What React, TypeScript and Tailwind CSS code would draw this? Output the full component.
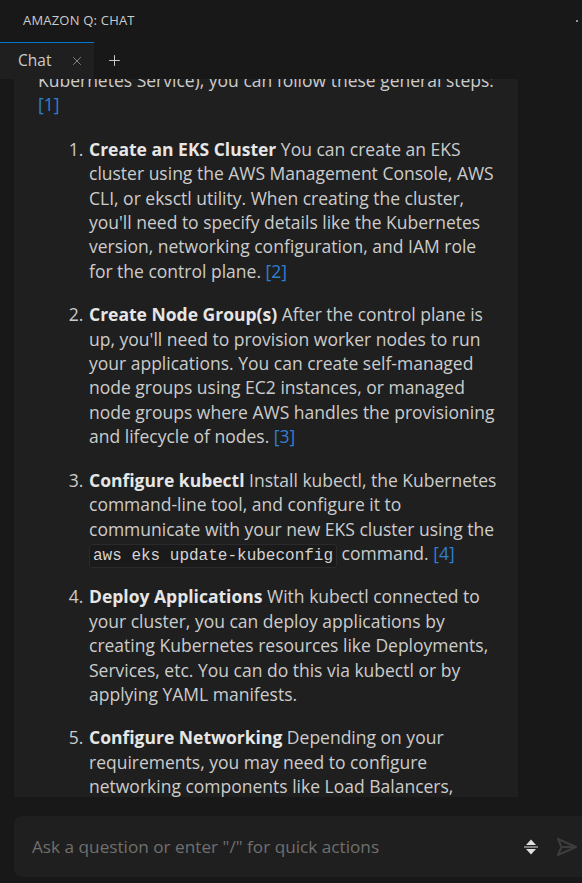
import { X, Plus } from 'lucide-react'

const link = 'text-[#2f7fd0]'

function Ref({ n }: { n: number }) {
  return <span className={link}>[{n}]</span>
}

export default function App() {
  return (
    <div
      className="w-[582px] h-[883px] bg-[#181818] text-[#cccccc] flex flex-col overflow-hidden"
      style={{ fontFamily: '"Open Sans", "Noto Sans", sans-serif' }}
    >
      {/* header */}
      <div className="h-[42px] flex items-center justify-between pl-[23px] pr-[4px] shrink-0">
        <span className="text-[13px] tracking-[0.2px] text-[#cccccc]">AMAZON Q: CHAT</span>
        <span className="w-[2px] h-[2px] bg-[#bbbbbb] rounded-full" />
      </div>

      {/* tabs */}
      <div className="h-[37px] flex items-stretch shrink-0">
        <div className="w-[94px] bg-[#1f1f1f] border-t border-[#0078d4] flex items-center pl-[18px] pr-[10px] justify-between">
          <span className="text-[15.5px] text-[#cccccc]">Chat</span>
          <X size={14} strokeWidth={1.4} className="text-[#9d9d9d]" />
        </div>
        <div className="flex items-center pl-[12px]">
          <Plus size={17} strokeWidth={1.4} className="text-[#cccccc]" />
        </div>
      </div>

      {/* conversation */}
      <div className="h-[718px] ml-[14px] w-[504px] bg-[#1f1f1f] overflow-hidden shrink-0">
        <div className="-mt-[11px] pl-[24px] pr-[18px] text-[17.5px] leading-[24.4px] text-[#cccccc]">
          <p>
            Kubernetes Service), you can follow these general steps:{' '}
            <Ref n={1} />
          </p>
          <ol className="list-decimal pl-[50px] mt-[20px] space-y-[19px]">
            <li className="pl-[1px]">
              <b className="font-bold text-[#e6e6e6]">Create an EKS Cluster</b> You can create an EKS
              cluster using the AWS Management Console, AWS CLI, or eksctl utility. When creating the
              cluster, you'll need to specify details like the Kubernetes version, networking
              configuration, and IAM role for the control plane. <Ref n={2} />
            </li>
            <li className="pl-[1px]">
              <b className="font-bold text-[#e6e6e6]">Create Node Group(s)</b> After the control plane
              is up, you'll need to provision worker nodes to run your applications. You can create
              self-managed node groups using EC2 instances, or managed node groups where AWS handles
              the provisioning and lifecycle of nodes. <Ref n={3} />
            </li>
            <li className="pl-[1px]">
              <b className="font-bold text-[#e6e6e6]">Configure kubectl</b> Install kubectl, the
              Kubernetes command-line tool, and configure it to communicate with your new EKS cluster
              using the{' '}
              <code
                className="bg-[#1a1a1a] border border-[#2a2a2a] rounded-[3px] px-[3px] py-[2px] text-[16px] leading-none text-[#d4d4d4] whitespace-nowrap"
                style={{ fontFamily: '"Liberation Mono", "DejaVu Sans Mono", monospace' }}
              >
                aws eks update-kubeconfig
              </code>{' '}
              command. <Ref n={4} />
            </li>
            <li className="pl-[1px]">
              <b className="font-bold text-[#e6e6e6]">Deploy Applications</b> With kubectl connected
              to your cluster, you can deploy applications by creating Kubernetes resources like
              Deployments, Services, etc. You can do this via kubectl or by applying YAML manifests.
            </li>
            <li className="pl-[1px]">
              <b className="font-bold text-[#e6e6e6]">Configure Networking</b> Depending on your
              requirements, you may need to configure networking components like Load Balancers,
              Ingress Controllers, and Network Policies.
            </li>
          </ol>
        </div>
      </div>

      {/* input */}
      <div className="mt-[19px] ml-[14px] w-[580px] h-[61px] bg-[#1f1f1f] rounded-[8px] flex items-center pl-[18px] shrink-0">
        <span className="flex-1 text-[17.2px] text-[#6f6f6f]">Ask a question or enter "/" for quick actions</span>
        <svg width="16" height="18" viewBox="0 0 16 18" className="mr-[17px]">
          <path d="M8 1.5 L13 7 H3 Z" fill="#e0e0e0" />
          <rect x="1" y="8.5" width="14" height="1" fill="#e0e0e0" />
          <path d="M3 11 H13 L8 16.5 Z" fill="#e0e0e0" />
        </svg>
        <svg width="22" height="20" viewBox="0 0 22 20" className="mr-[16px]" fill="none">
          <path d="M2 2 L20 10 L2 18 L5.5 10 Z M5.5 10 H20" stroke="#3d3d3d" strokeWidth="2" strokeLinejoin="round" />
        </svg>
      </div>
    </div>
  )
}
